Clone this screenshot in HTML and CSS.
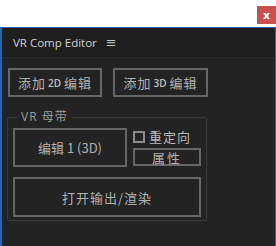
FILE: index.html
```html
<!DOCTYPE html>
<html lang="zh">
<head>
    <meta charset="UTF-8">
    <title>VR Comp Editor</title>
    <link rel="stylesheet" href="styles.css">
</head>
<body>
    <div class="topbar">
        <span class="close">x</span>
    </div>
    <div class="panel">
        <div class="header">
            <span class="title">VR Comp Editor</span>
            <span class="menu">&#8801;</span>
        </div>
        <div class="content">
            <div class="add-row">
                <button class="btn add">添加<span class="tag">2D</span> 编辑</button>
                <button class="btn add wide">添加<span class="tag">3D</span> 编辑</button>
            </div>
            <fieldset class="group">
                <legend>VR 母带</legend>
                <div class="group-row">
                    <button class="btn edit">编辑 1 (3D)</button>
                    <div class="side">
                        <label class="check"><span class="box"></span>重定向</label>
                        <button class="btn attr">属性</button>
                    </div>
                </div>
                <button class="btn render">打开输出/渲染</button>
            </fieldset>
        </div>
    </div>
</body>
</html>
```

FILE: styles.css
```css
* {
    margin: 0;
    padding: 0;
    box-sizing: border-box;
}

body {
    font-family: 'Open Sans', 'Noto Sans CJK SC', sans-serif;
    background: #fff;
    width: 276px;
    height: 246px;
    overflow: hidden;
}

.topbar {
    height: 27px;
    display: flex;
    justify-content: flex-end;
    align-items: flex-start;
    padding-top: 6px;
}

.close {
    width: 19px;
    height: 18px;
    background: #c9504f;
    color: #fff;
    font-family: 'DejaVu Sans', sans-serif;
    font-size: 11px;
    font-weight: bold;
    display: flex;
    justify-content: center;
    align-items: center;
}

.panel {
    height: 219px;
    background: #232323;
    border-top: 1px solid #2466a8;
    border-left: 2px solid #2466a8;
    border-right: 1px solid #2466a8;
}

.header {
    height: 30px;
    background: #1e1e1e;
    border-bottom: 1px solid #2b2b2b;
    display: flex;
    align-items: center;
    padding-left: 11px;
    color: #d2d2d2;
    font-size: 11.5px;
}

.menu {
    margin-left: 9px;
    font-family: 'DejaVu Sans', sans-serif;
    font-size: 13px;
    color: #c8c8c8;
}

.content {
    padding: 10px 0 0 6px;
}

.btn {
    background: #232323;
    border: 2px solid #666;
    color: #b2b2b2;
    font-family: 'Noto Sans CJK SC', sans-serif;
    font-size: 13px;
    display: flex;
    justify-content: center;
    align-items: center;
}

.add-row {
    display: flex;
    gap: 11px;
}

.add {
    width: 94px;
    height: 29px;
    letter-spacing: 1px;
}

.add.wide {
    width: 95px;
}

.tag {
    font-family: 'Open Sans', sans-serif;
    font-size: 10px;
    font-weight: 600;
    color: #c4c4c4;
    margin: 0 3px 0 2px;
    letter-spacing: 0;
}

.group {
    width: 200px;
    height: 111px;
    margin: 13px 0 0 -1px;
    border: 1px solid #3a3a3a;
    border-radius: 2px;
    padding: 4px 0 0 5px;
}

.group legend {
    margin-left: 4px;
    padding: 0 4px;
    color: #9c9c9c;
    font-family: 'Open Sans', 'Noto Sans CJK SC', sans-serif;
    font-size: 12px;
    line-height: 14px;
    letter-spacing: 1px;
}

.group-row {
    display: flex;
    gap: 6px;
}

.edit {
    width: 114px;
    height: 39px;
}

.side {
    display: flex;
    flex-direction: column;
    gap: 4px;
    padding-top: 1px;
}

.check {
    display: flex;
    align-items: center;
    gap: 4px;
    height: 15px;
    color: #b8b8b8;
    font-family: 'Noto Sans CJK SC', sans-serif;
    font-size: 13px;
    letter-spacing: 1px;
}

.box {
    width: 12px;
    height: 12px;
    border: 2px solid #8a8a8a;
}

.attr {
    width: 68px;
    height: 18px;
    letter-spacing: 2px;
}

.render {
    width: 188px;
    height: 40px;
    margin-top: 10px;
    letter-spacing: 1px;
}
```
